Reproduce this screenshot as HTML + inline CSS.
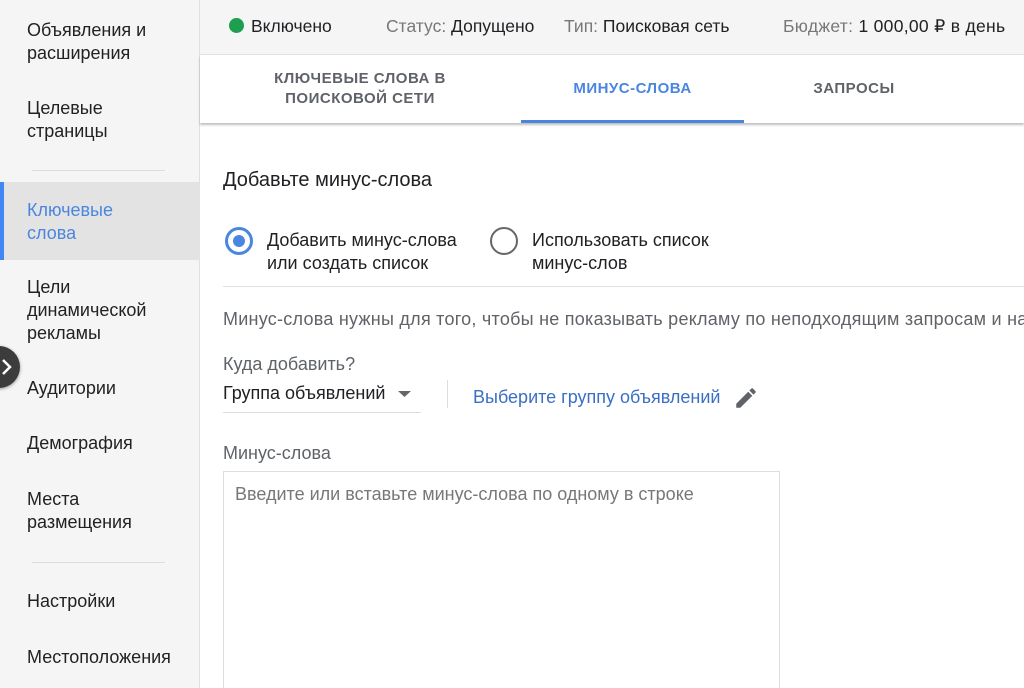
<!DOCTYPE html>
<html><head><meta charset="utf-8"><style>
*{margin:0;padding:0;box-sizing:border-box}
html,body{width:1024px;height:688px;overflow:hidden}
body{background:#fff;font-family:"Liberation Sans",sans-serif;color:#202124;position:relative}
.a{position:absolute;white-space:nowrap}
#side{position:absolute;left:0;top:0;width:200px;height:688px;background:#f5f5f5;border-right:1px solid #e0e0e0}
.si{position:absolute;left:27px;font-size:18px;line-height:23px;color:#222}
#top{position:absolute;left:200px;top:0;width:824px;height:55px;background:#f5f5f5;border-bottom:1px solid #e3e3e3;font-size:17.5px}
#tabs{position:absolute;left:200px;top:55px;width:824px;height:68px;background:#fff;box-shadow:0 2px 2px rgba(0,0,0,.25)}
.tab{position:absolute;font-size:15px;font-weight:bold;color:#5f6368;text-align:center;line-height:20px;letter-spacing:.5px}
.g{color:#777}
.t{font-size:18px}
</style></head><body>
<div id="side">
<div class="si" style="top:19px">Объявления и<br>расширения</div>
<div class="si" style="top:97px">Целевые<br>страницы</div>
<div class="a" style="left:32px;top:170px;width:133px;height:1px;background:#ddd"></div>
<div class="a" style="left:0;top:182px;width:200px;height:78px;background:#e3e3e3"></div>
<div class="a" style="left:0;top:182px;width:4px;height:78px;background:#4285f4"></div>
<div class="si" style="top:199px;color:#4a86e0">Ключевые<br>слова</div>
<div class="si" style="top:276px">Цели<br>динамической<br>рекламы</div>
<div class="si" style="top:377px">Аудитории</div>
<div class="si" style="top:432px">Демография</div>
<div class="si" style="top:488px">Места<br>размещения</div>
<div class="a" style="left:32px;top:562px;width:133px;height:1px;background:#ddd"></div>
<div class="si" style="top:590px">Настройки</div>
<div class="si" style="top:646px">Местоположения</div>
</div>
<div class="a" style="left:-22px;top:346px;width:42px;height:42px;border-radius:50%;background:#3c3c3c;box-shadow:0 1px 3px rgba(0,0,0,.4)"></div>
<svg class="a" style="left:0;top:357px" width="14" height="20"><path d="M3 3l7 7-7 7" stroke="#fff" stroke-width="2.5" fill="none"/></svg>
<div id="top">
<div class="a" style="left:29px;top:18px;width:15px;height:15px;border-radius:50%;background:#1e9e4f"></div>
<div class="a" style="left:51px;top:16px">Включено</div>
<div class="a" style="left:186px;top:16px"><span class="g">Статус:</span> Допущено</div>
<div class="a" style="left:364px;top:16px"><span class="g">Тип:</span> Поисковая сеть</div>
<div class="a" style="left:583px;top:16px;letter-spacing:.3px"><span class="g">Бюджет:</span> 1 000,00 ₽ в день</div>
</div>
<div id="tabs">
<div class="tab" style="left:50px;top:14px;width:220px">КЛЮЧЕВЫЕ СЛОВА В<br>ПОИСКОВОЙ СЕТИ</div>
<div class="tab" style="left:321px;top:24px;width:223px;color:#4a86e0">МИНУС-СЛОВА</div>
<div class="a" style="left:321px;top:65px;width:223px;height:3px;background:#4a86e0"></div>
<div class="tab" style="left:560px;top:24px;width:188px">ЗАПРОСЫ</div>
</div>
<div class="a" style="left:223px;top:169px;font-size:20px">Добавьте минус-слова</div>
<div class="a" style="left:225px;top:227px;width:28px;height:28px;border-radius:50%;border:3px solid #4a86e0"></div>
<div class="a" style="left:233px;top:235px;width:12px;height:12px;border-radius:50%;background:#4a86e0"></div>
<div class="a t" style="left:267px;top:229px;line-height:23px">Добавить минус-слова<br>или создать список</div>
<div class="a" style="left:490px;top:227px;width:28px;height:28px;border-radius:50%;border:2px solid #666"></div>
<div class="a t" style="left:532px;top:229px;line-height:23px">Использовать список<br>минус-слов</div>
<div class="a" style="left:223px;top:286px;width:801px;height:1px;background:#e0e0e0"></div>
<div class="a t" style="left:223px;top:309px;color:#5f6368;letter-spacing:.25px">Минус-слова нужны для того, чтобы не показывать рекламу по неподходящим запросам и на</div>
<div class="a t" style="left:223px;top:354px;color:#5f6368">Куда добавить?</div>
<div class="a t" style="left:223px;top:383px">Группа объявлений</div>
<svg class="a" style="left:397px;top:389px" width="16" height="10"><path d="M1 2h13l-6.5 6z" fill="#666"/></svg>
<div class="a" style="left:223px;top:412px;width:198px;height:1px;background:#ddd"></div>
<div class="a" style="left:447px;top:380px;width:1px;height:28px;background:#ddd"></div>
<div class="a t" style="left:473px;top:387px;color:#3b6fc4">Выберите группу объявлений</div>
<svg class="a" style="left:733px;top:385px" width="26" height="26" viewBox="0 0 24 24"><path d="M3 17.25V21h3.75L17.81 9.94l-3.75-3.75L3 17.25zM20.71 7.04a1 1 0 000-1.41l-2.34-2.34a1 1 0 00-1.41 0l-1.83 1.83 3.75 3.75 1.83-1.83z" fill="#5f6368"/></svg>
<div class="a t" style="left:223px;top:443px;color:#5f6368">Минус-слова</div>
<div class="a" style="left:223px;top:471px;width:557px;height:217px;border:1px solid #ddd;border-bottom:none"></div>
<div class="a t" style="left:235px;top:484px;color:#777">Введите или вставьте минус-слова по одному в строке</div>
</body></html>
